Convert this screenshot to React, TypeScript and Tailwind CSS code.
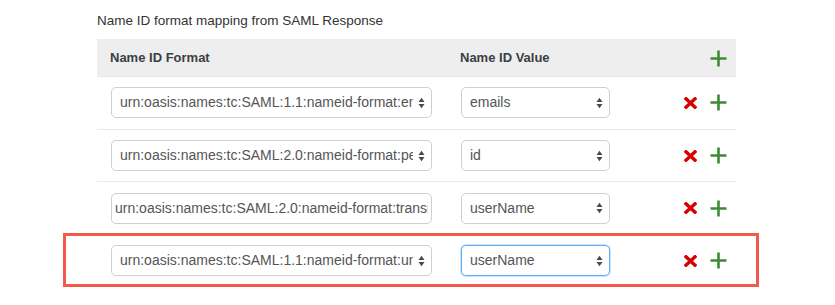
import React from "react";

type Row = {
  format: string;
  value: string;
  kind: "select" | "input";
  focused?: boolean;
  highlighted?: boolean;
};

const rows: Row[] = [
  { format: "urn:oasis:names:tc:SAML:1.1:nameid-format:emailAddress", value: "emails", kind: "select" },
  { format: "urn:oasis:names:tc:SAML:2.0:nameid-format:persistent", value: "id", kind: "select" },
  { format: "urn:oasis:names:tc:SAML:2.0:nameid-format:transient", value: "userName", kind: "input" },
  {
    format: "urn:oasis:names:tc:SAML:1.1:nameid-format:unspecified",
    value: "userName",
    kind: "select",
    focused: true,
    highlighted: true,
  },
];

const SortArrows = () => (
  <svg width="7" height="12" viewBox="0 0 7 12" className="pointer-events-none absolute right-[7px] top-1/2 -translate-y-1/2">
    <polygon points="0.5,5 3.5,0.8 6.5,5" fill="#4a4a4a" />
    <polygon points="0.5,7 3.5,11.2 6.5,7" fill="#4a4a4a" />
  </svg>
);

const PlusIcon = () => (
  <svg width="17" height="17" viewBox="0 0 17 17">
    <path d="M8.5 0.5v16M0.5 8.5h16" stroke="#3e8b35" strokeWidth="2.6" />
  </svg>
);

const RemoveIcon = () => (
  <svg width="13" height="12" viewBox="0 0 13 12">
    <path d="M2 1.8l9 8.4M11 1.8l-9 8.4" stroke="#d60000" strokeWidth="3.4" strokeLinecap="square" />
  </svg>
);

const Select = ({ value, width, focused }: { value: string; width: string; focused?: boolean }) => (
  <div className={`relative ${width}`}>
    <select
      defaultValue={value}
      className={`h-[31px] w-full appearance-none rounded-[5px] border bg-white pl-[8px] pr-[18px] text-[14px] text-[#555] outline-none ${
        focused ? "border-[#63aef0] shadow-[0_0_0_1px_rgba(99,174,240,0.35)]" : "border-[#cfcfcf]"
      }`}
    >
      <option value={value}>{value}</option>
    </select>
    <SortArrows />
  </div>
);

const MappingRow = ({ row }: { row: Row }) => (
  <div className="relative flex h-[52.7px] items-center border-t border-[#e9e9e9]">
    <div className="w-[350px] pl-[14px]">
      {row.kind === "select" ? (
        <Select value={row.format} width="w-[321px]" />
      ) : (
        <input
          defaultValue={row.format}
          className="h-[31px] w-[321px] rounded-[5px] border border-[#cfcfcf] bg-white px-[3px] text-[14px] text-[#555] outline-none"
        />
      )}
    </div>
    <div className="w-[176px] pl-[14px]">
      <Select value={row.value} width="w-[149px]" focused={row.focused} />
    </div>
    <div className="flex flex-1 items-center justify-end gap-[13px] pr-[9px]">
      <button className="flex items-center">
        <RemoveIcon />
      </button>
      <button className="flex items-center">
        <PlusIcon />
      </button>
    </div>
    {row.highlighted && (
      <div className="pointer-events-none absolute -left-[34px] -right-[23px] -top-[2px] h-[54px] border-[3px] border-[#f25a4b]" />
    )}
  </div>
);

export default function App() {
  return (
    <div className="min-h-[305px] bg-white pl-[97px] pt-[12px] font-['Liberation_Sans',Arial,sans-serif]">
      <div className="mb-[9px] h-[18px] text-[13.5px] leading-[18px] text-[#333]">
        Name ID format mapping from SAML Response
      </div>
      <div className="w-[639px]">
        <div className="flex h-[37px] items-center bg-[#eeeeee] pt-[1px] text-[13px] font-bold text-[#3a3f44]">
          <div className="w-[350px] pl-[13px]">Name ID Format</div>
          <div className="w-[176px] pl-[13px]">Name ID Value</div>
          <div className="flex flex-1 justify-end pr-[9px]">
            <button className="flex items-center">
              <PlusIcon />
            </button>
          </div>
        </div>
        {rows.map((row, i) => (
          <MappingRow key={i} row={row} />
        ))}
      </div>
    </div>
  );
}
